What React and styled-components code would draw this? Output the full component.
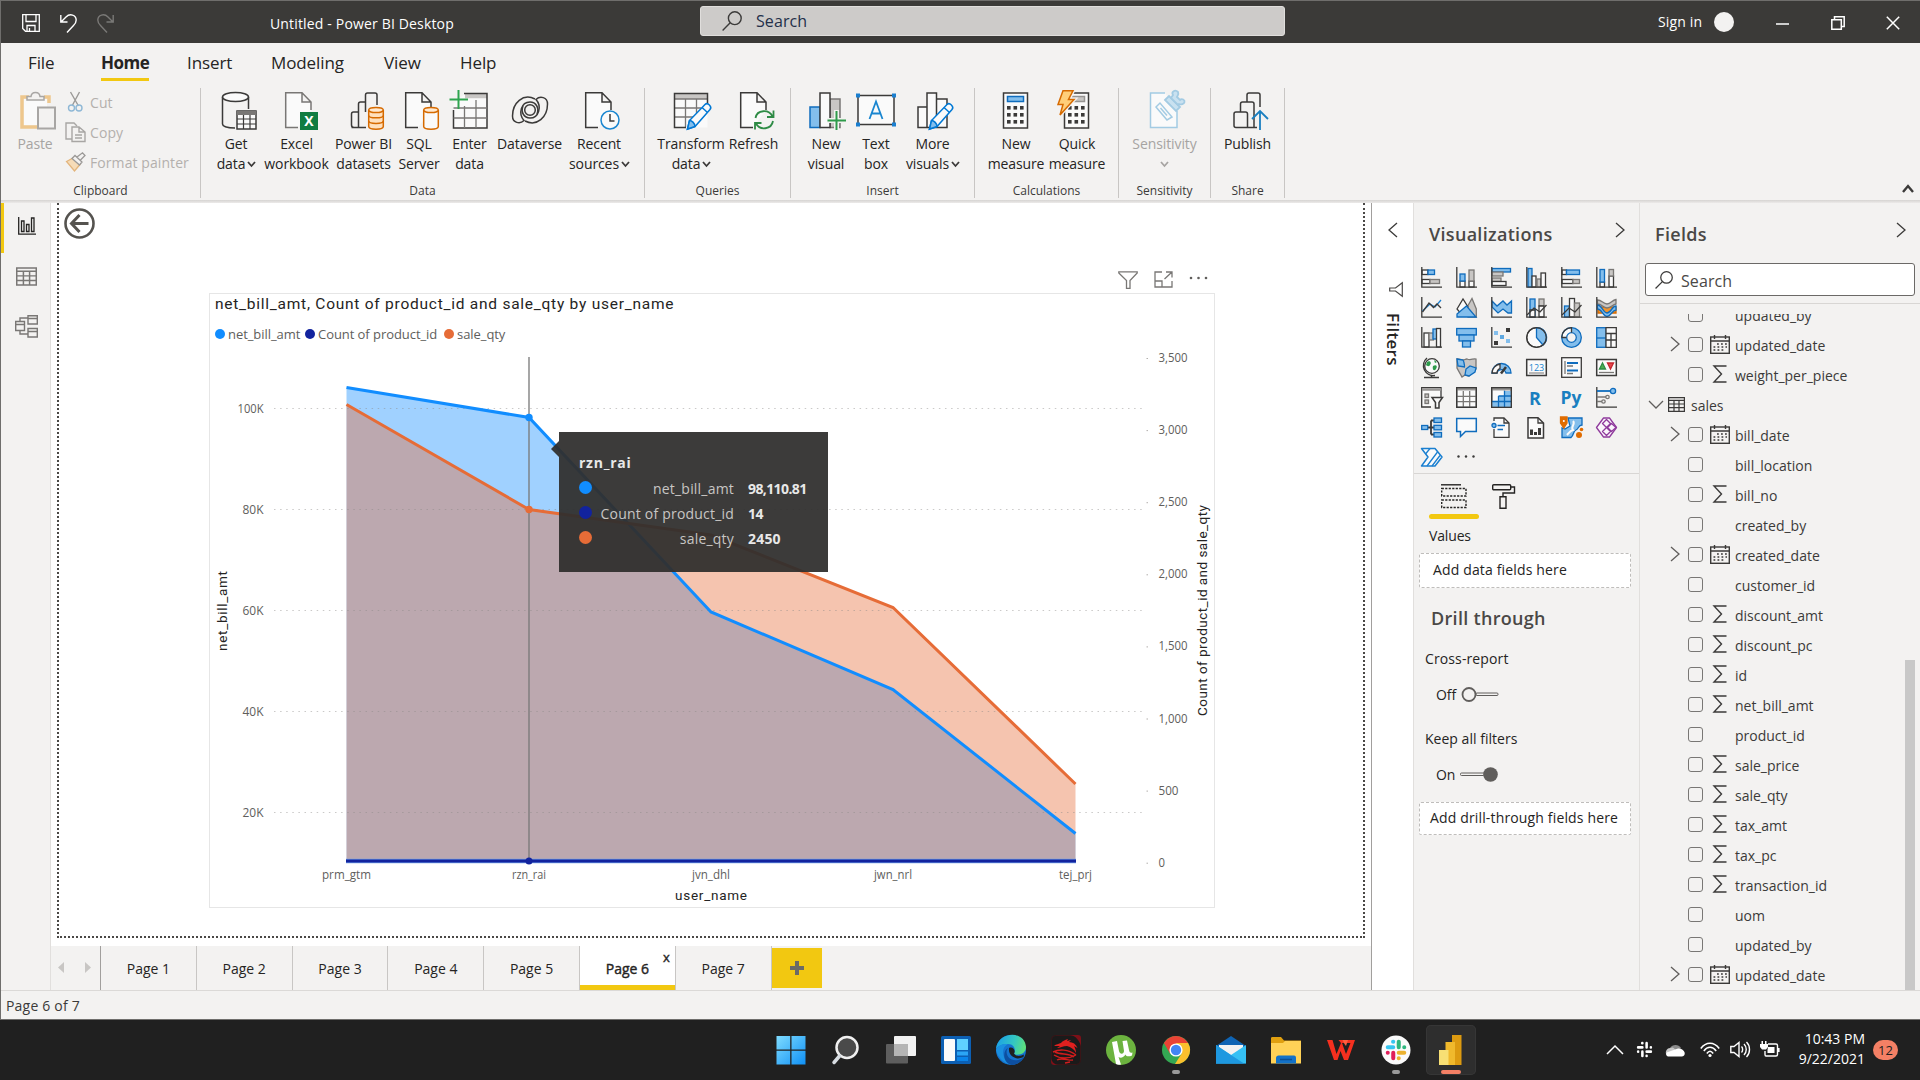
import React from "react";
import styled, { createGlobalStyle } from "styled-components";

const Global = createGlobalStyle`
  * { box-sizing: border-box; }
  body { margin: 0; background: #202020; overflow: hidden; }
  body, #root { font-family: "Open Sans", "Noto Sans", sans-serif; color: #252423; }
  svg { display: block; flex: none; overflow: visible; }
`;

const INK = "#3b3a39";
const BLUE = "#0f6cbd";
const SKY = "#83beec";
const GREY = "#c8c6c4";

/* ---------- frame ---------- */
const Screen = styled.div`
  width: 1920px; height: 1080px; display: flex; flex-direction: column; overflow: hidden;
`;
const Window = styled.div`
  height: 1020px; display: flex; flex-direction: column; background: #f3f2f1;
  border: 1px solid #6f6e6c; border-right: 0;
`;

/* ---------- title bar ---------- */
const TitleBar = styled.header`
  height: 42px; background: #3b3a38; color: #fff; display: flex; flex: none;
`;
const QuickTools = styled.div`
  width: 269px; display: flex; align-items: center; gap: 20px; padding: 2px 0 0 21px;
`;
const DocTitle = styled.div`
  width: 430px; font-size: 14px; line-height: 46px; letter-spacing: 0.16px;
`;
const TopSearch = styled.div`
  width: 585px; height: 30px; margin-top: 5px; border: 1px solid #e0dedc; border-radius: 3px;
  background: #cdcbc9; color: #243049; display: flex; align-items: center; gap: 14px;
  padding-left: 21px; font-size: 16px; letter-spacing: 0.1px;
`;
const Account = styled.div`
  margin-left: 373px; width: 78px; display: flex; align-items: center; gap: 12px; font-size: 14px;
  letter-spacing: 0.15px; white-space: nowrap; height: 41px;
`;
const Avatar = styled.span`
  width: 20px; height: 20px; border-radius: 50%; background: #f3f2f1; flex: none;
`;
const WindowButtons = styled.div`
  margin-left: 40px; height: 44px; display: flex; align-items: center; gap: 41px;
`;

/* ---------- ribbon ---------- */
const TabRow = styled.nav`
  height: 45px; display: flex; flex: none; padding-left: 27px; font-size: 17px; gap: 40px;
`;
const RibbonTab = styled.div`
  width: ${(p) => p.$w}px; height: 38px; line-height: 39px; white-space: nowrap; letter-spacing: -0.1px;
  margin-left: ${(p) => p.$ml || 0}px;
  font-weight: ${(p) => (p.$on ? 700 : 400)};
  ${(p) => p.$on && "letter-spacing:-0.5px;"}
  border-bottom: 3px solid ${(p) => (p.$on ? "#f2c811" : "transparent")};
`;
const Ribbon = styled.div`
  height: 112px; display: flex; flex: none; position: relative;
`;
const Group = styled.section`
  width: ${(p) => p.$w}px; height: 110px; border-right: 1px solid #c8c6c4; display: flex; flex-direction: column;
`;
const GroupBody = styled.div`
  height: 93px; flex: none; display: flex; padding: 2px 0 0 ${(p) => p.$pad || 0}px;
  justify-content: ${(p) => (p.$center ? "center" : "flex-start")};
`;
const GroupName = styled.div`
  text-align: center; font-size: 12px; line-height: 20px; letter-spacing: 0; color: #3b3a39; flex: none;
`;
const BigButton = styled.div`
  width: ${(p) => p.$w}px; display: flex; flex-direction: column; align-items: center; flex: none;
  color: ${(p) => (p.$off ? "#a6a4a2" : "#252423")};
`;
const BigLabel = styled.div`
  font-size: 14px; line-height: 20px; letter-spacing: -0.1px; white-space: nowrap;
  display: flex; align-items: center; gap: 3px; height: 20px;
  &:first-of-type { margin-top: 4px; }
`;
const SmallStack = styled.div`
  display: flex; flex-direction: column; padding: 0 0 0 10px; margin-top: -3px;
`;
const SmallButton = styled.div`
  height: 30px; display: flex; align-items: center; gap: 4px; color: #b3b0ad; font-size: 14px; white-space: nowrap;
  letter-spacing: 0.08px;
`;
const Collapse = styled.div`
  margin-left: auto; padding: 98px 7px 0 0;
`;
const RibbonShadow = styled.div`
  height: 3px; flex: none; background: linear-gradient(#d6d4d2, #eceae9);
`;

/* ---------- body ---------- */
const Body = styled.main`
  height: 787px; display: flex; flex: none;
`;
const Rail = styled.aside`
  width: 50px; border-right: 1px solid #e1dfdd; display: flex; flex-direction: column; flex: none;
`;
const RailItem = styled.div`
  height: 50px; display: flex; align-items: center; justify-content: center;
  border-left: 3px solid ${(p) => (p.$on ? "#f2c811" : "transparent")}; padding: 0 1px 4px 0;
`;
const Center = styled.div`
  width: 1320px; display: flex; flex-direction: column; flex: none; background: #fff;
`;
const Page = styled.div`
  margin: 0 6px 8px; width: 1308px; height: 735px; border: 2px dotted #4a4846; border-top: 0; padding-top: 5px;
  display: flex; flex-direction: column;
`;
const Back = styled.div` margin-left: 5px; height: 31px; flex: none; `;
const VisualTools = styled.div`
  height: 18px; margin: 32px 0 4px; padding-right: 156px; display: flex; justify-content: flex-end; gap: 16px; flex: none;
`;
const Visual = styled.article`
  margin-left: 150px; width: 1006px; height: 615px; border: 1px solid #e6e6e6; position: relative; flex: none;
`;
const VisualTitle = styled.h3`
  margin: 0; height: 28px; padding-left: 5px; font: 400 15.5px/21px Roboto, sans-serif; letter-spacing: 0.75px; color: #252423;
`;
const Legend = styled.div`
  height: 23px; display: flex; align-items: center; padding-left: 5px; font-size: 13px; color: #605e5c;
`;
const LegendItem = styled.div`
  width: ${(p) => p.$w}px; display: flex; align-items: center; gap: 3px; white-space: nowrap; letter-spacing: -0.06px;
`;
const Dot = styled.span`
  width: ${(p) => p.$s}px; height: ${(p) => p.$s}px; border-radius: 50%; background: ${(p) => p.$c}; flex: none;
`;
const Tooltip = styled.div`
  position: absolute; left: 349px; top: 138px; width: 269px; height: 140px; background: rgba(48, 47, 46, 0.94);
  color: #e8e8e8; padding: 19px 0 0 20px; display: flex; flex-direction: column; font-size: 14px;
  &::before {
    content: ""; position: absolute; left: -8px; top: 9px; width: 8px; height: 16px;
    background: rgba(48, 47, 46, 0.94); clip-path: polygon(100% 0, 100% 100%, 0 50%);
  }
`;
const TipTitle = styled.div` font-weight: 700; line-height: 23px; height: 24px; letter-spacing: 0.75px; `;
const TipRow = styled.div`
  height: 25px; display: grid; grid-template-columns: 13px 142px 1fr; align-items: center;
`;
const TipName = styled.span` text-align: right; color: #c8c6c4; letter-spacing: 0.2px; white-space: nowrap; padding-top: 2px;`;
const TipValue = styled.b` padding: 2px 0 0 14px; letter-spacing: ${(p) => p.$ls}px; `;

const PageTabs = styled.div`
  height: 44px; display: flex; background: #f3f2f1; flex: none;
`;
const TabArrows = styled.div`
  width: 50px; border-right: 1px solid #a19f9d; display: flex; align-items: center; gap: 21px; padding: 0 7px 2px;
`;
const PageTab = styled.div`
  width: 95.8px; border-right: 1px solid #c8c6c4; text-align: center; font-size: 14px; line-height: 45px; position: relative;
  background: ${(p) => (p.$on ? "#fff" : "transparent")};
  box-shadow: ${(p) => (p.$on ? "inset 0 -5px #f2c811" : "none")};
  -webkit-text-stroke: ${(p) => (p.$on ? "0.4px #252423" : "0")};
`;
const TabClose = styled.span`
  position: absolute; right: 5px; top: 2px; font-size: 13px; line-height: 18px;
`;
const AddPage = styled.div`
  width: 50px; height: 40px; margin-top: 2px; background: #f2c811; display: flex; align-items: center; justify-content: center;
`;

/* ---------- panes ---------- */
const FilterPane = styled.aside`
  width: 43px; background: #fff; border-left: 1px solid #a19f9d; border-right: 1px solid #e1dfdd; flex: none;
  display: flex; flex-direction: column; padding: 20px 0 0 17px;
`;
const FilterIcon = styled.div` margin-top: 45px; `;
const FilterTitle = styled.div`
  writing-mode: vertical-rl; align-self: flex-start; margin: 16px 0 0 -8px; font-size: 17px; line-height: 24px; font-weight: 600;
  letter-spacing: 0.3px;
`;
const VizPane = styled.aside`
  width: 226px; border-right: 1px solid #e1dfdd; flex: none; display: flex; flex-direction: column;
`;
const PaneHead = styled.div`
  height: ${(p) => p.$h}px; padding: 18px 15px 0 15px; display: flex; justify-content: space-between;
  svg { margin-top: 2px; }
`;
const PaneTitle = styled.h2`
  margin: 0; font-size: 18px; line-height: 26px; font-weight: 600; color: #4a4846; letter-spacing: 0.3px;
`;
const VizGrid = styled.div`
  display: grid; grid-template-columns: repeat(6, 35px); grid-auto-rows: 30px; padding-left: 7px; height: 206px;
`;
const Rule = styled.div` height: 1px; background: #d8d6d4; flex: none; `;
const FormatTabs = styled.div`
  display: flex; height: 46px; padding-left: 15px; gap: 1px;
`;
const FormatTab = styled.div`
  width: 50px; padding: 10px 0 0 12px; height: 45px; position: relative;
  &::after { content: ""; display: ${(p) => (p.$on ? "block" : "none")}; margin: 5px 0 0 -12px; width: 50px; height: 5px;
    border-radius: 3px; background: #f2c811; }
`;
const PaneLabel = styled.div`
  font-size: 14px; line-height: 20px; height: 20px; margin: ${(p) => p.$m}; letter-spacing: ${(p) => p.$ls}px;
`;
const DropWell = styled.div`
  margin: ${(p) => p.$mt || 0}px 8px 0 5px; height: ${(p) => p.$h}px; line-height: ${(p) => p.$h - 4}px; border: 1px dashed #bfbdbb; border-radius: 2px;
  background: #fff; font-size: 14px; padding-left: ${(p) => p.$pad}px; white-space: nowrap; letter-spacing: 0.15px;
`;
const DrillTitle = styled(PaneTitle)` margin: 17px 0 0 17px; `;
const Switch = styled.div`
  display: flex; align-items: center; gap: 5px; height: 20px; margin: 15px 0 0 22px; font-size: 14px; letter-spacing: -0.1px;
`;

const FieldPane = styled.aside`
  flex: 1; display: flex; flex-direction: column;
`;
const FieldSearch = styled.div`
  margin: 0 5px 7px; height: 33px; flex: none; border: 1px solid #6b6967; border-radius: 3px; background: #fff; display: flex; align-items: center;
  gap: 8px; padding-left: 9px; font-size: 16px; color: #4a4846; letter-spacing: 0.1px;
  span { padding-top: 2px; }
`;
const ListWrap = styled.div`
  display: flex; margin-top: 10px; height: 676px; overflow: hidden;
`;
const List = styled.div` width: 265px; margin-top: -15px; `;
const FieldRow = styled.div`
  height: 30px; display: flex; align-items: center; font-size: 14px; color: #3b3a39; white-space: nowrap;
  padding-left: ${(p) => (p.$table ? 9 : 31)}px;
`;
const Twisty = styled.span` width: ${(p) => p.$w}px; flex: none; `;
const Check = styled.span`
  width: 15px; height: 15px; border: 1px solid #797775; border-radius: 3px; flex: none;
`;
const Kind = styled.span`
  width: ${(p) => p.$w}px; flex: none; display: flex; justify-content: ${(p) => (p.$w > 30 ? "center" : "flex-start")};
`;
const FieldName = styled.span` padding-top: 2px; margin-left: ${(p) => p.$ml || 0}px; `;
const Thumb = styled.div` width: 10px; height: 330px; margin-top: 346px; background: #c8c8c8; `;

const Status = styled.footer`
  flex: 1; border-top: 1px solid #dbd9d7; padding-left: 5px; font-size: 14px; line-height: 30px; color: #3b3a39; letter-spacing: 0.2px;
`;

/* ---------- taskbar ---------- */
const Taskbar = styled.div`
  height: 60px; background: #202020; display: flex; color: #fff;
`;
const Apps = styled.div` margin-left: 766px; display: flex; gap: 5px; padding-top: 5px; width: 834px; `;
const AppTile = styled.div`
  width: 50px; height: 50px; border-radius: 5px; display: flex; flex-direction: column; align-items: center;
  padding-top: 10px; background: ${(p) => (p.$on ? "#2e2e2e" : "transparent")};
  box-shadow: ${(p) => (p.$on ? "inset 0 0 0 1px #363636" : "none")};
`;
const Running = styled.span`
  margin-top: 5px; height: 4px; border-radius: 2px; width: ${(p) => (p.$on ? 20 : 8)}px; background: ${(p) => (p.$on ? "#f48065" : "#9a9a9a")};
`;
const Tray = styled.div`
  display: flex; align-items: center; width: 180px; padding-left: 7px; height: 59px;
`;
const TrayItem = styled.span` margin-left: ${(p) => p.$ml}px; `;
const Clock = styled.div`
  width: 85px; text-align: right; font-size: 14px; line-height: 20px; padding-top: 9px; letter-spacing: 0;
`;
const Badge = styled.div`
  margin: 20px 0 0 8px; width: 25px; height: 20px; border-radius: 10px; background: #f48065; color: #202020;
  font-size: 13px; line-height: 20px; text-align: center;
`;

/* ---------- small drawings ---------- */
const Chevron = ({ d = "right", w = 8, h = 14, c = "#3b3a39", s = 1.3 }) => {
  const pts = {
    right: `0,0 ${w},${h / 2} 0,${h}`,
    left: `${w},0 0,${h / 2} ${w},${h}`,
    down: `0,0 ${w / 2},${h} ${w},0`,
    up: `0,${h} ${w / 2},0 ${w},${h}`,
  }[d];
  return (
    <svg width={w} height={h}><polyline points={pts} fill="none" stroke={c} strokeWidth={s} /></svg>
  );
};
const Magnifier = ({ s = 20, c = "#3b3a39" }) => (
  <svg width={s} height={s} viewBox="0 0 20 20" fill="none" stroke={c} strokeWidth="1.4">
    <circle cx="12.8" cy="7.2" r="6.4" /><path d="M8.2 11.8L.6 19.4" />
  </svg>
);

/* ribbon icons, 40 x 40 */
const Ico = ({ children, ...r }) => (
  <svg width="40" height="40" viewBox="0 0 40 40" fill="none" stroke={INK} strokeWidth="1.5" {...r}>{children}</svg>
);
const Doc = ({ x = 6, c = INK }) => (
  <path d={`M${x + 13} 37.5H${x + 0.7}V2.8H${x + 17}L${x + 26} 12V20M${x + 17} 2.8V12H${x + 26}`} stroke={c} fill="#fafafa" />
);
const Cyl = ({ rings }) => (
  <g stroke="#d66a00" fill="#ffe9cf">
    <path d="M24.7 20V36.5C24.7 40 39.3 40 39.3 36.5V20" fill={rings ? "#ffe0bd" : "#fafafa"} />
    <ellipse cx="32" cy="20" rx="7.3" ry="2.6" />
    {rings && <path d="M24.7 25.5C24.7 28.6 39.3 28.6 39.3 25.5M24.7 31C24.7 34.2 39.3 34.2 39.3 31" fill="none" />}
  </g>
);
const Pencil = () => (
  <g stroke="#0078d4" fill="#fafafa">
    <path d="M16.5 39L18.5 30.5L34 14.5C36.5 12 41.5 16.5 39 19.5L24 36.5Z" />
    <path d="M16.5 39L18.5 30.5C21 30.5 24 33.5 24 36.5Z" fill={SKY} />
    <path d="M31 17.5L36.5 22.5" />
  </g>
);
const CalcBody = ({ x, grey }) => (
  <g>
    <rect x={x} y="3" width="24" height="35" fill="#fafafa" />
    <rect x={x + 4} y="6.5" width="16" height="5" fill={grey ? GREY : SKY} stroke={grey ? "#979593" : BLUE} />
    {[16, 23, 30].map((y) => [4, 10.5, 17].map((dx) => (
      <rect key={y + "-" + dx} x={x + dx - 0.5} y={y} width="3.6" height="3.6" fill={INK} stroke="none" />
    )))}
  </g>
);

const icons = {
  get: (
    <Ico>
      <path d="M6.5 7V34C6.5 36.5 12 38 19 38M32.500 7V19" fill="none" />
      <ellipse cx="19.5" cy="7" rx="13" ry="4.6" fill="#fafafa" />
      <rect x="21" y="21" width="19" height="18" fill="#fafafa" /><path d="M21 23H40" strokeWidth="4" stroke="#797775" />
      <path d="M21 29H40M21 34H40M27.5 25V39M34 25V39" strokeWidth="1.2" />
    </Ico>
  ),
  excel: (
    <Ico>
      <Doc x={8} c="#797775" />
      <rect x="23" y="22" width="18" height="18" fill="#107c41" stroke="none" />
      <text x="32" y="36" fontSize="14" fontWeight="700" fill="#fff" stroke="none" textAnchor="middle">X</text>
    </Ico>
  ),
  pbi: (
    <Ico>
      <path d="M13.5 37.5H10C8 37.5 7.5 37 7.5 35V24C7.5 22.5 8 22 9.5 22H14M14.5 37.5V14C14.5 12.5 15 12 16.5 12H21M7.5 37.5H22M21.5 22V5C21.5 3.5 22 3 23.5 3H31C32.5 3 33 3.5 33 5V15" fill="none" />
      <Cyl rings />
    </Ico>
  ),
  sql: <Ico><Doc /><Cyl /></Ico>,
  enter: (
    <Ico>
      <path d="M3.5 14V38H37V3.5H15" fill="#fafafa" stroke="none" />
      <path d="M15 6H37" strokeWidth="4.5" stroke={GREY} /><path d="M14 3.5H37V38H3.5V20" fill="none" />
      <path d="M14.5 16V38M26 10V38M3.5 18H37M3.5 28H37" stroke="#797775" strokeWidth="1.3" />
      <path d="M-.5 9.500H18M8.500 0V19" stroke="#2ea44f" strokeWidth="2" />
    </Ico>
  ),
  dataverse: (
    <Ico strokeWidth="1.5">
      <path d="M25 9C13 3 2.500 13 2.500 26C2.500 33 10 34.500 14 30.500C8 24 11 12 20 12C26 12 29.500 18 27 24" />
      <path d="M15 31C27 37 37.500 27 37.500 14C37.500 7 30 5.500 26 9.500C32 16 29 28 20 28C14 28 10.500 22 13 16" />
      <circle cx="20" cy="20" r="5.300" />
    </Ico>
  ),
  recent: (
    <Ico>
      <Doc x={6} />
      <circle cx="31" cy="30" r="9" fill="#fafafa" stroke="#1a86d0" /><path d="M31 24V31H35.500" />
    </Ico>
  ),
  transform: (
    <Ico>
      <rect x="3.5" y="3.5" width="33" height="34" fill="#fafafa" stroke="none" />
      <path d="M3.5 6.5H36.5" stroke={GREY} strokeWidth="5" />
      <path d="M3.5 18H30M3.5 27H22M14.5 9V37M25.5 9V23M3.5 9H36.5" stroke="#797775" strokeWidth="1.3" />
      <path d="M15 37.5H3.5V3.5H36.5V14" fill="none" /><Pencil />
    </Ico>
  ),
  refresh: (
    <Ico>
      <Doc />
      <g stroke="#2e8b45" strokeWidth="1.8">
        <path d="M21.5 28C23 19.5 35 19 38.5 26.5M39.5 20.5V27H33" fill="none" />
        <path d="M39 31C37.5 39.5 26 41 22 33.5M21 39.5V33H27.5" fill="none" />
      </g>
    </Ico>
  ),
  newVisual: (
    <Ico>
      <rect x="24" y="9" width="10" height="28.5" fill={GREY} stroke="#797775" />
      <rect x="4" y="17" width="10" height="20.5" fill={SKY} stroke={BLUE} />
      <rect x="14" y="3" width="10" height="34.5" fill="#fafafa" />
      <path d="M30.5 20V40M21 30.5H40" stroke="#f3f2f1" strokeWidth="5" />
      <path d="M30.5 21V40M21.5 30.5H40" stroke="#2e9b4b" strokeWidth="2" />
    </Ico>
  ),
  textBox: (
    <Ico>
      <rect x="2" y="5.5" width="36" height="29" fill="#fafafa" />
      {[[2, 5.5], [38, 5.5], [2, 34.5], [38, 34.5]].map(([x, y]) => (
        <rect key={x + "," + y} x={x - 2} y={y - 2} width="4" height="4" fill="#1a7fd0" stroke="none" />
      ))}
      <path d="M13.5 29L20 11.5L26.5 29M15.5 23.5H24.5" stroke="#1a86d0" strokeWidth="1.8" />
    </Ico>
  ),
  moreVisuals: (
    <Ico>
      <path d="M5 17H14V37.5H5Z M14 3H23.5V37.5H14Z M23.5 9H34V37.5H23.5Z" fill="#fafafa" /><Pencil />
    </Ico>
  ),
  newMeasure: <Ico><CalcBody x={7.5} /></Ico>,
  quick: (
    <Ico>
      <CalcBody x={7.5} grey />
      <path d="M6 0.8H16L11.5 9.5H17L3 25L6 14.5H1Z" fill="#ffd58a" stroke="#f3f2f1" strokeWidth="4" />
      <path d="M6 0.8H16L11.5 9.5H17L3 25L6 14.5H1Z" fill="#ffcf7a" stroke="#d66a00" />
    </Ico>
  ),
  sensitivity: (
    <Ico stroke="#a3cbe3">
      <path d="M20 3H5.5V37.5H32V21" fill="#fafafa" />
      <path d="M11 17L15 13L27 27L22 30ZM15.5 18L22 25.5" />
      <path d="M20 10L24 6L35 17L31 21Z" fill="#c9e1f0" strokeWidth="1.800" />
      <path d="M26 8L28 5C26 2 30 -1 33 2C34 4 33 5 32 7L35 10C37 8 40 10 39.500 12C39 14 36 15 34 14L33 15Z" fill="#c9e1f0" strokeWidth="1.800" />
    </Ico>
  ),
  publish: (
    <Ico>
      <path d="M19.5 37.5H8C6.5 37.5 6 37 6 35.5V24C6 22.5 6.5 22 8 22H12.5M19.5 37.5V24C19.5 22.5 19 22 17.5 22H12.5V14C12.5 12.5 13 12 14.5 12H19M26 37.5V14C26 12.5 25.5 12 24 12H19V5C19 3.5 19.5 3 21 3H30C31.5 3 32 3.5 32 5V17M19.5 37.5H29" fill="none" />
      <path d="M32 40V22M24 29L32 21L40 29" stroke="#1a7fc0" strokeWidth="1.8" />
    </Ico>
  ),
  paste: (
    <Ico stroke="#a8a6a4">
      <path d="M14 7H7V37H22M29 7H34V13" stroke="#eec78d" strokeWidth="3.5" />
      <path d="M9 9H32V35H9Z" fill="#fafafa" stroke="none" />
      <path d="M12 10V6.5H16C16.5 1 24.5 1 25 6.5H29V10Z" fill="#f3f2f1" />
      <rect x="23" y="17.5" width="17" height="21" fill="#f3f2f1" strokeWidth="2" />
    </Ico>
  ),
};

const smallIcons = {
  cut: (
    <svg width="21" height="20" viewBox="0 0 21 20" fill="none" strokeWidth="1.4">
      <path d="M5.5 0L13.5 14M14.5 0L7 14" stroke="#9b9997" /><circle cx="6.5" cy="16" r="3" stroke="#8fb8d6" /><circle cx="14" cy="16" r="3" stroke="#8fb8d6" />
    </svg>
  ),
  copy: (
    <svg width="21" height="20" viewBox="0 0 21 20" fill="none" stroke="#a8a6a4" strokeWidth="1.4">
      <path d="M7 17H1V1H9L12 4" /><path d="M7 5H14L20 10V19.5H7ZM14 5V10H20M10 13H17M10 16H17" fill="#f3f2f1" />
    </svg>
  ),
  painter: (
    <svg width="21" height="20" viewBox="0 0 21 20" fill="none" strokeWidth="1.3">
      <path d="M1.5 9.5L8 6L15 12.5L9.5 19Z" fill="#f6dcb8" stroke="#e3b57c" /><path d="M7 6.5L10 3.5L17 10L14.5 13Z M12 5L17.5 0.8L20 3.5L15.5 8" fill="#f3f2f1" stroke="#9b9997" />
    </svg>
  ),
};

const L = ({ children, caret, off }) => (
  <BigLabel>{children}{caret && <Chevron d="down" w={7} h={4} s={1.8} c={off ? "#a6a4a2" : INK} />}</BigLabel>
);
const Big = ({ w, icon, a, b, caret, off }) => (
  <BigButton $w={w} $off={off}>
    {icons[icon]}
    <L>{a}</L>
    {(b || caret) && <L caret={caret} off={off}>{b}</L>}
  </BigButton>
);

const groups = [
  { name: "Data", w: 444, pad: 5, items: [
    { w: 60, icon: "get", a: "Get", b: "data", caret: true },
    { w: 61, icon: "excel", a: "Excel", b: "workbook" },
    { w: 73, icon: "pbi", a: "Power BI", b: "datasets" },
    { w: 38, icon: "sql", a: "SQL", b: "Server" },
    { w: 63, icon: "enter", a: "Enter", b: "data" },
    { w: 57, icon: "dataverse", a: "Dataverse" },
    { w: 82, icon: "recent", a: "Recent", b: "sources", caret: true }] },
  { name: "Queries", w: 146, pad: 16, items: [
    { w: 60, icon: "transform", a: "Transform", b: "data", caret: true },
    { w: 65, icon: "refresh", a: "Refresh" }] },
  { name: "Insert", w: 184, pad: 9, items: [
    { w: 52, icon: "newVisual", a: "New", b: "visual" },
    { w: 48, icon: "textBox", a: "Text", b: "box" },
    { w: 65, icon: "moreVisuals", a: "More", b: "visuals", caret: true }] },
  { name: "Calculations", w: 144, pad: 10, items: [
    { w: 62, icon: "newMeasure", a: "New", b: "measure" },
    { w: 60, icon: "quick", a: "Quick", b: "measure" }] },
  { name: "Sensitivity", w: 92, center: true, items: [{ w: 80, icon: "sensitivity", a: "Sensitivity", caret: true, off: true }] },
  { name: "Share", w: 74, center: true, items: [{ w: 60, icon: "publish", a: "Publish" }] },
];

/* visualization gallery, 21 x 21 */
const V = ({ children }) => (
  <svg width="21" height="21" viewBox="0 0 21 21" fill="none" stroke={INK} strokeWidth="1.3">{children}</svg>
);
const Axis = () => <path d="M.8 0V20.2H21" />;
const Grid3 = ({ fill }) => (
  <>
    <rect x=".7" y=".7" width="19.6" height="19.6" fill="#fafafa" />
    {fill && <path d="M13.5 4H20V20H1V14H7.5V9H13.5Z" fill={SKY} stroke="none" />}
    {fill && <path d="M13.5 3.5V20M7.5 9V20M7.5 9H20M1 14.5H20" stroke={BLUE} />}
    <path d="M1 2.2H20" stroke="#979593" strokeWidth="2.5" />
    {!fill && <path d="M7.3 4V20M13.7 4V20M1 9.3H20M1 14.7H20" stroke="#797775" />}
    <rect x=".7" y=".7" width="19.6" height="19.6" />
  </>
);
const B = { fill: SKY, stroke: BLUE };
const G = { fill: GREY, stroke: "#797775" };
const W = { fill: "#fafafa", stroke: INK };
const gallery = [
  <V><rect x="1" y="3" width="6" height="4.5" {...W} /><rect x="7" y="3" width="6.5" height="4.5" {...B} /><rect x="1" y="12.5" width="8" height="4" {...W} /><rect x="9" y="12.5" width="9.5" height="4" {...G} /><Axis /></V>,
  <V><rect x="4" y="14" width="5" height="6" {...W} /><rect x="4" y="7" width="5" height="7" {...B} /><rect x="13" y="14" width="5" height="6" {...W} /><rect x="13" y="3" width="5" height="11" {...G} /><Axis /></V>,
  <V><rect x="1" y="1.5" width="18.5" height="3.5" {...B} /><rect x="1" y="5" width="11" height="4" {...G} /><rect x="1" y="11" width="9" height="3.5" {...G} /><rect x="1" y="14.5" width="14" height="4" {...W} /><Axis /></V>,
  <V><rect x="2" y="1.5" width="4" height="18.5" {...B} /><rect x="6" y="9" width="4" height="11" {...W} /><rect x="11" y="12" width="4" height="8" {...G} /><rect x="15" y="6" width="4.5" height="14" {...W} /><Axis /></V>,
  <V><rect x="1" y="3" width="4.5" height="4.5" {...W} /><rect x="5.5" y="3" width="13" height="4.5" {...B} /><rect x="1" y="12.5" width="11" height="4" {...W} /><rect x="12" y="12.5" width="6.5" height="4" {...G} /><Axis /></V>,
  <V><rect x="4" y="15" width="4.5" height="5" {...W} /><rect x="4" y="2.5" width="4.5" height="12.5" {...B} /><rect x="13" y="9" width="4.5" height="11" {...W} /><rect x="13" y="2.5" width="4.5" height="6.5" {...G} /><Axis /></V>,
  <V><Axis /><path d="M1.5 14L9 7L14 10L20 3" stroke="#1a7fd0" /><path d="M1.5 15L8 6L12.5 10.5L16 7L20 11" /></V>,
  <V><path d="M10 12L16 1.5L20.3 12V20H12Z" {...G} /><path d="M1 12L7 2L12 10L6 18Z" {...W} /><path d="M1 20V17L10.5 9L20 20Z" {...B} /></V>,
  <V><path d="M1 4L6 9L12 4L16 8L20.5 4V16H17L12 12L7 16L1 10Z" {...B} /><Axis /></V>,
  <V><rect x="4" y="2" width="5" height="18" {...B} /><rect x="13" y="2" width="5" height="7" {...G} /><path d="M4 13H9V20H4ZM13 9H18V20H13Z" {...W} /><path d="M1 18L8 11L14 15L20.5 8" /><Axis /></V>,
  <V><rect x="3.5" y="9" width="5" height="11" {...B} /><rect x="8.5" y="1.5" width="5" height="18.5" {...W} /><rect x="13.5" y="6" width="5" height="14" {...G} /><path d="M1 18L8 11L14 15L20.5 8" /><Axis /></V>,
  <V><path d="M2 10H20V16H2Z" fill="#f0932b" stroke="#d66a00" /><path d="M1.5 3C6 3 7 7 11 7C15 7 16 3 20 2.5V7C16 8 15 11 11 11C7 11 6 7 1.5 7Z" {...G} /><path d="M1.5 8C6 8 7 16 11 16C15 16 16 9 20 9V13C16 13 15 19.5 11 19.5C7 19.5 6 12 1.5 12Z" {...B} /><Axis /></V>,
  <V><rect x="3" y="6" width="5" height="14" {...W} /><rect x="8" y="6" width="4.5" height="7" {...G} /><rect x="12" y="2" width="4" height="10" {...B} /><rect x="15.5" y="1.5" width="4" height="18.5" {...W} /><Axis /></V>,
  <V><rect x=".7" y="1.5" width="19.6" height="6.5" {...B} /><rect x="3" y="8" width="15" height="6" {...B} /><rect x="6.5" y="14" width="8" height="6" {...B} /></V>,
  <V><Axis /><g stroke="none"><rect x="3" y="4" width="4" height="4" fill={SKY} /><rect x="9" y="8" width="4" height="4" fill="#5ea8e0" /><rect x="15" y="1" width="4" height="4" fill={INK} /><rect x="3" y="14" width="4" height="4" fill={INK} /><rect x="15" y="12" width="4" height="4" fill={SKY} /></g></V>,
  <V><circle cx="10.5" cy="10.5" r="9.8" {...W} /><path d="M10.5 .7A9.8 9.8 0 0 1 17 18L10.5 10.5Z" {...B} /><circle cx="10.5" cy="10.5" r="9.8" /></V>,
  <V><circle cx="10.5" cy="10.5" r="7.5" stroke={SKY} strokeWidth="5" /><path d="M3 10.5A7.5 7.5 0 0 1 10.5 3" stroke="#fafafa" strokeWidth="5" /><circle cx="10.5" cy="10.5" r="9.8" stroke={BLUE} /><circle cx="10.5" cy="10.5" r="4.8" stroke={BLUE} /><path d="M.7 10.5A9.8 9.8 0 0 1 10.5 .7V5.5M.7 10.5H5.5" /></V>,
  <V><rect x=".7" y=".7" width="9.3" height="19.6" {...B} /><path d="M.7 11H10" stroke={BLUE} /><path d="M10 .7H20.3V20.3H10ZM10 6.5H20M15 6.5V20M10 13H15M15 13H20" fill="#fafafa" /></V>,
  <V><circle cx="11" cy="9" r="7.3" fill="#fafafa" /><path d="M6 5C9 3 11 6 9 8C8 10 6 9 5 8ZM12 9C15 7 17 9 15 12C13 15 11 12 12 9ZM13 3L16 5L14 6Z" fill="#2e9b4b" stroke="none" /><path d="M6 1A10 10 0 0 0 14 18.5M10.5 18V20M3 20.5H18" strokeWidth="1.5" /></V>,
  <V><path d="M1 2L7 3C9 3 9 2 11 2C15 4 17 1 20 2V12L13 19L9 18L6 20L1 11Z" {...G} /><path d="M1 2L7 3C9 6 8 10 9 10L2 9ZM9 18L10 12L14 9L20 11L19 15L13 19Z" {...B} /></V>,
  <V><path d="M1 16A9.5 9.5 0 0 1 20 16H15A4.7 4.7 0 0 0 6 16Z" {...B} /><path d="M1 16A9.5 9.5 0 0 1 9 7V11.5A4.7 4.7 0 0 0 6 16Z" {...W} /><path d="M10 16.5L15 10" strokeWidth="2.5" /></V>,
  <V><rect x=".7" y="2.5" width="19.6" height="16" {...W} strokeWidth="1.5" /><path d="M3 16H18" stroke="#979593" /><text x="10.5" y="13.5" fontSize="9" textAnchor="middle" fill="#1a86d0" stroke="none">123</text></V>,
  <V><rect x=".7" y=".7" width="19.6" height="19.6" {...W} /><path d="M4 4V17" stroke="#797775" /><path d="M6 6H17M6 13.5H17" stroke={BLUE} strokeWidth="1.8" /><path d="M6 9H12M6 16.5H12" stroke="#797775" /></V>,
  <V><rect x=".7" y="2.5" width="19.6" height="16" {...W} strokeWidth="1.5" /><path d="M3 15.5H18" stroke="#797775" /><path d="M3.5 12L6.5 6L9.5 12Z" fill="#4caf50" stroke="#2e8b45" /><path d="M11.5 6H17.5L14.5 12Z" fill="#e8484e" stroke="#c4262e" /></V>,
  <V><path d="M10 20H.7V.7H20V10" {...W} /><path d="M1 2.5H20" stroke="#979593" strokeWidth="2.5" /><rect x="4" y="7" width="3.5" height="3.5" {...G} /><rect x="4" y="13" width="3.5" height="3.5" {...G} /><path d="M11 10.5H21.5L18 15.5V21H14.5V15.5Z" {...W} strokeWidth="1.5" /></V>,
  <V><Grid3 /></V>,
  <V><Grid3 fill /></V>,
  <V><text x="9" y="17.5" fontSize="18" fontWeight="700" textAnchor="middle" fill="#1a7fc0" stroke="none">R</text></V>,
  <V><text x="10" y="16.5" fontSize="17.5" fontWeight="700" textAnchor="middle" fill="#1a7fc0" stroke="none">Py</text></V>,
  <V><Axis /><path d="M1 4H14" stroke={BLUE} strokeWidth="1.8" /><circle cx="17" cy="4" r="2.6" {...B} /><path d="M1 10H10M1 14.5H6" stroke="#797775" /><circle cx="11.5" cy="10" r="1.7" stroke="#797775" /><circle cx="7.5" cy="14.5" r="1.7" stroke="#797775" /></V>,
  <V><path d="M7 10.5H13M10 3.5V17.5M10 3.5H13M10 17.5H13" strokeWidth="1.8" /><rect x=".7" y="8.5" width="6" height="4" {...B} /><rect x="13" y="1" width="7.5" height="4.5" {...B} /><rect x="13" y="8.3" width="7.5" height="4.5" {...B} /><rect x="13" y="15.5" width="7.5" height="4.5" {...B} /></V>,
  <V><path d="M.7 1.5H20.3V14.5H9.5L4.5 19.5V14.5H.7Z" fill="#fafafa" stroke={BLUE} strokeWidth="1.5" /></V>,
  <V><path d="M3 4V1H13L18 6V20.3H3V12" {...W} /><path d="M13 1V6H18" /><circle cx="3" cy="8.5" r="2" {...B} /><path d="M6.5 8.5H14M6.5 12.5H12" stroke={BLUE} /></V>,
  <V><path d="M2 .7H12L17.5 6V21H2Z" {...W} strokeWidth="1.5" /><path d="M12 1V6H17" /><path d="M5.5 18V12.5M9.5 18V15M13.5 18V11" strokeWidth="3" /></V>,
  <V><path d="M7 1H21V8C17 8 18 12 15 13C12 14 13 18 10 20.5H1V11L4 12L9 9Z" fill={SKY} stroke={BLUE} /><path d="M12 4C15 7 9 10 12 13C9 14 8 16 6 18" stroke="#fafafa" strokeWidth="2" /><path d="M-.5 0H6V6L2.8 11L-.5 6Z" fill="#e06c00" stroke="#e06c00" /><circle cx="2.8" cy="4" r="1" fill="#fff" stroke="none" /><circle cx="18" cy="18" r="3" fill="#e06c00" stroke="none" /><circle cx="20.5" cy="12.5" r="1.8" fill="#e06c00" stroke="none" /></V>,
  <V>
    <g stroke="#8f3a9c" strokeWidth="1.300" fill="#faf5fb" strokeLinejoin="round">
      <path d="M7.500 1H13.500L20.500 10.500L13.500 20H7.500L.5 10.500Z" />
      <path d="M10.500 2.500L14.500 6.500L10.500 10.500L6.500 6.500ZM15.500 6.500L20 10.500L15.500 14.500L11.500 10.500ZM10.500 10.500L14.500 14.500L10.500 18.500L6.500 14.500Z" />
    </g>
  </V>,
  <V>
    <path d="M.5 1.500H14L21 10L14 19H.5L7 10Z" fill="#fafafa" stroke="#1a7fd0" strokeWidth="1.500" strokeLinejoin="round" />
    <path d="M4.500 7L9 1.500M6 19L16.500 5M11 19L19 8.500" stroke="#1a7fd0" strokeWidth="1.300" />
  </V>,
  <V><g fill={INK} stroke="none"><circle cx="2.5" cy="9.5" r="1.2" /><circle cx="10" cy="9.5" r="1.2" /><circle cx="17.5" cy="9.5" r="1.2" /></g></V>,
];

/* ---------- chart ---------- */
const XS = [346.5, 529, 711, 893, 1075.5];
const amt = [387.5, 417.5, 612, 689.5, 833.5];
const qty = [404.5, 509.5, 535, 607.5, 784];
const users = [["prm_gtm", 49], ["rzn_rai", 34], ["jvn_dhl", 38], ["jwn_nrl", 38], ["tej_prj", 33]];
const line = (ys) => ys.map((y, i) => `${XS[i]},${y}`).join(" ");
const area = (ys) => `${XS[0]},861 ${line(ys)} ${XS[4]},861`;

const Chart = () => (
  <svg width="1004" height="562" viewBox="210 345 1004 562">
    <polygon points={area(amt)} fill="#118dff" fillOpacity=".4" />
    <polygon points={area(qty)} fill="#e66c37" fillOpacity=".4" />
    {[["100K", 409, 26], ["80K", 510, 21], ["60K", 611, 21], ["40K", 712, 21], ["20K", 813, 21]].map(([t, y, w]) => (
      <g key={t}>
        <path d={`M274 ${y - 0.5}H1145`} stroke="#8a8886" strokeOpacity=".45" strokeDasharray="1.5 4.6" />
        <text x={263.5 - w} y={y + 4} fontSize="12" fill="#605e5c" textLength={w} lengthAdjust="spacingAndGlyphs">{t}</text>
      </g>
    ))}
    {[3500, 3000, 2500, 2000, 1500, 1000, 500, 0].map((n, i) => (
      <g key={n}>
        <rect x="1146.5" y={358 + i * 72.1} width="1.5" height="1" fill="#b3b0ad" />
        <text x="1158.5" y={362 + i * 72.1} fontSize="12" fill="#605e5c" lengthAdjust="spacingAndGlyphs" textLength={n >= 1000 ? 29 : n ? 20 : 6.5}>
          {n.toLocaleString("en-US")}
        </text>
      </g>
    ))}
    <path d="M529 357V861" stroke="#777" strokeWidth="1.3" />
    <polyline points={line(amt)} fill="none" stroke="#118dff" strokeWidth="3" />
    <polyline points={line(qty)} fill="none" stroke="#e66c37" strokeWidth="3" />
    <path d="M346 861H1076" stroke="#6f9fe8" strokeWidth="4.5" /><path d="M346 861H1076" stroke="#12239e" strokeWidth="3" />
    <circle cx="529" cy="417.5" r="3.7" fill="#118dff" />
    <circle cx="529" cy="509.5" r="3.7" fill="#e66c37" />
    <circle cx="529" cy="861" r="3.5" fill="#12239e" />
    {users.map(([u, w], i) => (
      <text key={u} x={XS[i] - w / 2} y="879" fontSize="12" fill="#605e5c" textLength={w} lengthAdjust="spacingAndGlyphs">{u}</text>
    ))}
    <g fontFamily="Roboto" fontSize="13.5" fill="#252423">
      <text x="675" y="900" textLength="72">user_name</text>
      <text transform="translate(227 651) rotate(-90)" textLength="80">net_bill_amt</text>
      <text transform="translate(1207 716) rotate(-90)" textLength="211">Count of product_id and sale_qty</text>
    </g>
  </svg>
);

/* ---------- fields ---------- */
const Calendar = () => (
  <svg width="20" height="19" viewBox="0 0 20 19" fill="none" stroke={INK} strokeWidth="1.4">
    <rect x=".7" y="2" width="18.6" height="16.3" /><path d="M1 6H19M4.5 0V4M15.5 0V4" /><path d="M7 9H17M3.5 12H17M3.5 15H14" strokeDasharray="1.8 2.2" />
  </svg>
);
const Sigma = () => (
  <svg width="14" height="18" viewBox="0 0 14 18" fill="none" stroke={INK} strokeWidth="1.4"><path d="M13.5 1H1L8.5 9L1 17H13.5" /></svg>
);
const TableIcon = ({ w = 17, h = 15, c = INK }) => (
  <svg width={w} height={h} viewBox="0 0 17 15" fill="none" stroke={c} strokeWidth="1.2">
    <path d="M.6 .6H16.4V14.4H.6ZM.6 3.3H16.4M.6 7H16.4M.6 10.7H16.4M6 3V14M11 3V14" />
  </svg>
);
const fields = [
  ["updated_by"], ["updated_date", "d"], ["weight_per_piece", "s"], ["sales", "t"], ["bill_date", "d"], ["bill_location"],
  ["bill_no", "s"], ["created_by"], ["created_date", "d"], ["customer_id"], ["discount_amt", "s"], ["discount_pc", "s"],
  ["id", "s"], ["net_bill_amt", "s"], ["product_id"], ["sale_price", "s"], ["sale_qty", "s"], ["tax_amt", "s"],
  ["tax_pc", "s"], ["transaction_id", "s"], ["uom"], ["updated_by"], ["updated_date", "d"],
];
const Field = ({ name, kind }) =>
  kind === "t" ? (
    <FieldRow $table>
      <Twisty $w={19}><Chevron d="down" w={14} h={7} c="#605e5c" /></Twisty>
      <Kind $w={24}><TableIcon /></Kind>
      <FieldName $ml={-1}>{name}</FieldName>
    </FieldRow>
  ) : (
    <FieldRow>
      <Twisty $w={17}>{kind === "d" && <Chevron c="#605e5c" />}</Twisty>
      <Check />
      <Kind $w={33}>{kind === "d" ? <Calendar /> : kind === "s" ? <Sigma /> : null}</Kind>
      <FieldName $ml={-1}>{name}</FieldName>
    </FieldRow>
  );

/* ---------- taskbar icons, 30 x 30 ---------- */
const T = ({ children }) => <svg width="30" height="30" viewBox="0 0 30 30" fill="none">{children}</svg>;
const Slack = ({ mono, s = 22 }) => {
  const c = mono ? ["#fff", "#fff", "#fff", "#fff"] : ["#36c5f0", "#2eb67d", "#ecb22e", "#e01e5a"];
  return (
    <svg width={s} height={s} viewBox="0 0 24 24" x="4" y="4" strokeWidth={mono ? 3.6 : 4.4} strokeLinecap="round">
      <g stroke={c[0]}><path d="M3 9H9M9 3H8.8" /></g><g stroke={c[1]}><path d="M15 3V9M21 9V9.1" /></g>
      <g stroke={c[2]}><path d="M15 15H21M15 21V21.1" /></g><g stroke={c[3]}><path d="M9 15V21M3 15V15.1" /></g>
    </svg>
  );
};
const apps = [
  <T><defs><linearGradient id="win" x1="0" y1="0" x2="1" y2="1"><stop stopColor="#7fdcff" /><stop offset="1" stopColor="#0f90f5" /></linearGradient></defs>
    <path d="M.5 1H14.2V14.5H.5ZM15.5 1H29.5V14.5H15.5ZM.5 15.8H14.2V29.5H.5ZM15.5 15.8H29.5V29.5H15.5Z" fill="url(#win)" /></T>,
  <T><circle cx="16" cy="12.5" r="10.5" fill="#4a4a4a" stroke="#f0f0f0" strokeWidth="2.5" /><path d="M8.5 21L3 27.5" stroke="#d8dde2" strokeWidth="3.5" strokeLinecap="round" /></T>,
  <T><rect x="8" y="1" width="22" height="20" rx="1" fill="#f2f2f2" /><rect x="0" y="9" width="22" height="19.5" rx="1" fill="#6a6a6a" fillOpacity=".85" /><path d="M8 9H22V21H8Z" fill="#b5b5b5" /></T>,
  <T><rect y="1" width="30" height="28" rx="1.5" fill="#0c5fb3" /><rect x="3" y="4" width="11" height="22" rx="1" fill="#fafafa" /><path d="M16 4H27V15H16Z" fill="#5fd0ff" /><path d="M16 16.5H27V20.5H16Z" fill="#2ba5f5" /><path d="M16 22H27V26H16Z" fill="#0a84ea" /></T>,
  <T><defs><linearGradient id="edge" x1="0" y1=".3" x2="1" y2=".5"><stop stopColor="#1aa0e8" /><stop offset=".6" stopColor="#35c8c0" /><stop offset="1" stopColor="#5fe07a" /></linearGradient></defs>
    <circle cx="15" cy="15" r="15" fill="#1573cf" /><path d="M0 14C2 -4 29 -5 30 12C30 20 20 21 18 18.5C20 16 19 9 12 9C6 9 2 11 0 14Z" fill="url(#edge)" />
    <path d="M12 9.5C4 12 6 27 17 30C10 29.5 2 24 0 15C3 9 9 8.5 12 9.5Z" fill="#1a8fe0" /><path d="M12 13C8 18 13 27 22 25C24 24.5 26 23.5 28 22C25 28 19 30 15 30C6 27 7 15 12 13Z" fill="#0d4fa0" /><path d="M13 13C17 11 20 16 18 18.5C20 22 25 21 28 19.5L27.5 22C20 26 12 21 13 13Z" fill="#202020" /></T>,
  <T><rect x=".5" y=".5" width="29" height="29" rx="4" fill="#1b1a1a" stroke="#3a1517" /><path d="M19 0H27C29 0 30 1 30 3V11C28 5 25 1 19 0ZM0 24C2 28 4 30 9 30H4C1 30 0 29 0 26Z" fill="#7d1018" />
    <path d="M3 11C5 9 8 9 10 8C11 6 14 5 17 4L16 6L20 5L18 7C22 7 25 9 26.500 13L23 11C24 13 25 15 25 18C23 14 20 12 16 11C12 11 9 13 6 13L9 11Z" fill="#e0201f" />
    <path d="M2 17C8 14 17 14 25 20M3 20C9 24 18 24 25 20M4 17C10 20 18 18 23 22M6 25C11 22 18 26 22 25M14 28L19 27" stroke="#d21d1d" strokeWidth="1.400" /></T>,
  <T><circle cx="15" cy="15" r="15" fill="#6cb33f" /><path d="M6 7L11 6L13 16C14 20 18 19 18 16L16.5 6L21 5.5L23 15C23.5 18 25 18 26.5 17.5L26 20.5C23 22 20 21.5 19.5 19.5C18 22.5 14.5 23.5 12.5 22L15 29.5C13 30 11 29.8 10 29Z" fill="#fff" /></T>,
  <T><circle cx="15" cy="15" r="14" fill="#34a853" /><path d="M15 15L2.9 8A14 14 0 0 1 27.1 8Z" fill="#ea4335" /><path d="M15 8H27.1A14 14 0 0 1 14 29L21 18Z" fill="#fbc02d" /><path d="M2.9 8L9 18.5L15 8Z" fill="#ea4335" /><circle cx="15" cy="15" r="6.6" fill="#fff" /><circle cx="15" cy="15" r="5.2" fill="#4285f4" /></T>,
  <T><path d="M0 11L15 1L30 11V28.5H0Z" fill="#0f64b4" /><path d="M3 10H27V20H3Z" fill="#f2f2f2" /><path d="M0 10L15 20L30 10V28.5H0Z" fill="#35c0f4" /><path d="M0 10L15 20L28 28.5H0Z" fill="#1e98e0" /></T>,
  <T><path d="M0 3C0 2 1 2 2 2H10L13 5.5H30V12H0Z" fill="#e0a010" /><path d="M0 8H12L14 6H30V28.5H0Z" fill="#ffd257" /><path d="M5 28.5V23C5 21.5 6 20.5 7.5 20.5H23C24.5 20.5 25 21.5 25 23V28.5Z" fill="#1372c8" /><path d="M9 24.5H21" stroke="#0b4f94" strokeWidth="1.5" /></T>,
  <T><path d="M1 5H6.5L10.5 19L15 8L12.5 5H29L22 25H18L14.5 16L11.5 25H8Z" fill="#f5301f" /><path d="M16 8L20 19L24.5 8Z" fill="#202020" /><path d="M16.5 5H22L20 11L18.5 9Z" fill="#ff5f3f" /></T>,
  <T><circle cx="15" cy="15" r="14.5" fill="#fafafa" /><Slack /></T>,
  <T><path d="M16 0H25.5V30H16Z" fill="#dc9a10" /><path d="M9.5 7H19V30H9.5Z" fill="#f0b92c" /><path d="M3 15H12.5V30H3Z" fill="#f7df74" /></T>,
];

const App = () => (
  <Screen>
    <Global />
    <Window>
      <TitleBar>
        <QuickTools>
          <svg width="18" height="18" fill="none" stroke="#fff" strokeWidth="1.3"><path d="M.7 .7H17.3V17.3H3.5L.7 14.5ZM4 1V7.5H14V1M5 17V11.5H13V17M7.5 14V17" /></svg>
          <svg width="17" height="19" fill="none" stroke="#fff" strokeWidth="1.4"><path d="M.8 1V8H7.5M1 8L6 3C10 -1 16 1 16.2 6C16.2 8.5 15 10 13.5 11.5L7 18.5" /></svg>
          <svg width="17" height="19" fill="none" stroke="#7a7977" strokeWidth="1.4"><path d="M16.2 1V8H9.5M16 8L11 3C7 -1 1 1 .8 6C.8 8.5 2 10 3.5 11.5L10 18.5" /></svg>
        </QuickTools>
        <DocTitle>Untitled - Power BI Desktop</DocTitle>
        <TopSearch><Magnifier s={20} /> Search</TopSearch>
        <Account>Sign in <Avatar /></Account>
        <WindowButtons>
          <svg width="14" height="14" stroke="#fff" strokeWidth="1.5"><path d="M0 8H13" /></svg>
          <svg width="14" height="14" fill="none" stroke="#fff" strokeWidth="1.5"><path d="M3.5 3.5V.8H13.2V10.5H10.5M.8 3.7H10.3V13.2H.8Z" /></svg>
          <svg width="14" height="14" stroke="#fff" strokeWidth="1.5"><path d="M.8 .8L13.2 13.2M13.2 .8L.8 13.2" /></svg>
        </WindowButtons>
      </TitleBar>

      <TabRow>
        <RibbonTab $w={32}>File</RibbonTab>
        <RibbonTab $w={48} $ml={1} $on>Home</RibbonTab>
        <RibbonTab $w={43} $ml={-2}>Insert</RibbonTab>
        <RibbonTab $w={73} $ml={1}>Modeling</RibbonTab>
        <RibbonTab $w={35}>View</RibbonTab>
        <RibbonTab $w={40} $ml={1}>Help</RibbonTab>
      </TabRow>
      <Ribbon>
        <Group $w={200}>
          <GroupBody $pad={14}>
            <Big w={40} icon="paste" a="Paste" off />
            <SmallStack>
              <SmallButton>{smallIcons.cut} Cut</SmallButton>
              <SmallButton>{smallIcons.copy} Copy</SmallButton>
              <SmallButton>{smallIcons.painter} Format painter</SmallButton>
            </SmallStack>
          </GroupBody>
          <GroupName>Clipboard</GroupName>
        </Group>
        {groups.map((g) => (
          <Group key={g.name} $w={g.w}>
            <GroupBody $pad={g.pad} $center={g.center}>
              {g.items.map((it) => <Big key={it.icon} {...it} />)}
            </GroupBody>
            <GroupName>{g.name}</GroupName>
          </Group>
        ))}
        <Collapse><Chevron d="up" w={10} h={6} s={2.4} c={INK} /></Collapse>
      </Ribbon>
      <RibbonShadow />

      <Body>
        <Rail>
          <RailItem $on>
            <svg width="18" height="18" fill="none" stroke="#252423" strokeWidth="1.3"><path d="M.7 0V17.2H18M3.5 4H6V14.5H3.5ZM8.5 7.5H11V14.5H8.5ZM13.5 1H16V14.5H13.5Z" /></svg>
          </RailItem>
          <RailItem><TableIcon w={21} h={19} c="#797775" /></RailItem>
          <RailItem>
            <svg width="23" height="23" fill="none" stroke="#797775" strokeWidth="1.4"><path d="M13 .7H22.3V9H13ZM13 3.5H22M.7 6.5H9.5V15.5H.7ZM.7 9.5H9.5M13 13.5H22.3V22H13ZM13 16.5H22M5 6.5V3H13M5 15.5V19H13" /></svg>
          </RailItem>
        </Rail>

        <Center>
          <Page>
            <Back>
              <svg width="31" height="31" fill="none" stroke="#55534f" strokeWidth="2.6"><circle cx="15.5" cy="15.5" r="14" /><path d="M24.5 15.5H7.5M15.5 7L7.5 15.5L15.5 24" strokeWidth="3" /></svg>
            </Back>
            <VisualTools>
              <svg width="20" height="18" fill="none" stroke="#797775" strokeWidth="1.3"><path d="M.8 .8H19.2V2L12 9.5V17.3H8.5V9.5L.8 2Z" /></svg>
              <svg width="19" height="17" fill="none" stroke="#797775" strokeWidth="1.3"><path d="M8 1H1V16H18V10M12 1H18V6.5M18 1L10.5 8M1 10H8V16" /></svg>
              <svg width="18" height="17" fill="#605e5c"><circle cx="2" cy="7" r="1.3" /><circle cx="9.5" cy="7" r="1.3" /><circle cx="17" cy="7" r="1.3" /></svg>
            </VisualTools>
            <Visual>
              <VisualTitle>net_bill_amt, Count of product_id and sale_qty by user_name</VisualTitle>
              <Legend>
                <LegendItem $w={90}><Dot $s={10} $c="#118dff" />net_bill_amt</LegendItem>
                <LegendItem $w={139}><Dot $s={10} $c="#12239e" />Count of product_id</LegendItem>
                <LegendItem $w={70}><Dot $s={10} $c="#e66c37" />sale_qty</LegendItem>
              </Legend>
              <Chart />
              <Tooltip>
                <TipTitle>rzn_rai</TipTitle>
                <TipRow><Dot $s={13} $c="#118dff" /><TipName>net_bill_amt</TipName><TipValue $ls={-0.6}>98,110.81</TipValue></TipRow>
                <TipRow><Dot $s={13} $c="#12239e" /><TipName>Count of product_id</TipName><TipValue $ls={-0.5}>14</TipValue></TipRow>
                <TipRow><Dot $s={13} $c="#e66c37" /><TipName>sale_qty</TipName><TipValue $ls={0.2}>2450</TipValue></TipRow>
              </Tooltip>
            </Visual>
          </Page>
          <PageTabs>
            <TabArrows>
              <svg width="6" height="11"><path d="M6 0V11L0 5.5Z" fill="#c8c6c4" /></svg>
              <svg width="6" height="11"><path d="M0 0V11L6 5.5Z" fill="#c8c6c4" /></svg>
            </TabArrows>
            {[1, 2, 3, 4, 5, 6, 7].map((n) => (
              <PageTab key={n} $on={n === 6}>Page {n}{n === 6 && <TabClose>x</TabClose>}</PageTab>
            ))}
            <AddPage><svg width="14" height="14" stroke="#6b6a66" strokeWidth="4"><path d="M0 7H14M7 0V14" /></svg></AddPage>
          </PageTabs>
        </Center>

        <FilterPane>
          <Chevron d="left" />
          <FilterIcon>
            <svg width="14" height="15" fill="none" stroke="#4a4846" strokeWidth="1.2"><path d="M13.3 .7V14.3L6.5 9H.7V6H6.5Z" /></svg>
          </FilterIcon>
          <FilterTitle>Filters</FilterTitle>
        </FilterPane>

        <VizPane>
          <PaneHead $h={64}><PaneTitle>Visualizations</PaneTitle><Chevron /></PaneHead>
          <VizGrid>{gallery.map((g, i) => <React.Fragment key={i}>{g}</React.Fragment>)}</VizGrid>
          <Rule />
          <FormatTabs>
            <FormatTab $on>
              <svg width="26" height="25" fill="none" stroke="#252423" strokeWidth="1.4"><path d="M0 .8H20" /><path d="M.7 4.5H25V12H.7ZM.7 16H25V23.5H.7Z" strokeDasharray="2.2 1.3" /></svg>
            </FormatTab>
            <FormatTab>
              <svg width="24" height="25" fill="none" stroke="#252423" strokeWidth="1.4"><rect x=".7" y=".8" width="18" height="5" rx="1" /><path d="M19 3H22.5V9H11V12.5M8 12.8H14V24.3H8Z" /></svg>
            </FormatTab>
          </FormatTabs>
          <PaneLabel $m="6px 0 7px 15px" $ls={-0.15}>Values</PaneLabel>
          <DropWell $h={35} $pad={13}>Add data fields here</DropWell>
          <DrillTitle>Drill through</DrillTitle>
          <PaneLabel $m="18px 0 0 11px" $ls={0.12}>Cross-report</PaneLabel>
          <Switch>Off
            <svg width="39" height="15" fill="#f3f2f1" stroke="#605e5c" strokeWidth="1.8"><rect x="15" y="6" width="22" height="2.5" rx="1" strokeWidth="1" /><circle cx="8" cy="7.5" r="6.5" /></svg>
          </Switch>
          <PaneLabel $m="25px 0 0 11px" $ls={0.02}>Keep all filters</PaneLabel>
          <Switch>On
            <svg width="39" height="15" fill="#f3f2f1" stroke="#605e5c"><rect x=".5" y="6" width="24" height="2.5" rx="1" /><circle cx="30.5" cy="7.5" r="7.3" fill="#605e5c" stroke="none" /></svg>
          </Switch>
          <DropWell $h={33} $pad={10} $mt={18}>Add drill-through fields here</DropWell>
        </VizPane>

        <FieldPane>
          <PaneHead $h={60}><PaneTitle>Fields</PaneTitle><Chevron /></PaneHead>
          <FieldSearch><Magnifier s={18} /><span>Search</span></FieldSearch>
          <Rule />
          <ListWrap>
            <List>{fields.map(([n, k], i) => <Field key={i} name={n} kind={k} />)}</List>
            <Thumb />
          </ListWrap>
        </FieldPane>
      </Body>
      <Status>Page 6 of 7</Status>
    </Window>

    <Taskbar>
      <Apps>
        {apps.map((a, i) => (
          <AppTile key={i} $on={i === 12}>{a}{[7, 11, 12].includes(i) && <Running $on={i === 12} />}</AppTile>
        ))}
      </Apps>
      <Tray>
        <Chevron d="up" w={16} h={8} c="#fff" s={1.5} />
        <TrayItem $ml={13}><Slack mono s={17} /></TrayItem>
        <TrayItem $ml={12}>
          <svg width="20" height="14"><path d="M5 5A6.5 6.5 0 0 1 16 5L10 9Z" fill="#8a8a8a" /><path d="M5 5A4.6 4.6 0 0 0 1 11L12 8L8 4.5Z" fill="#c8c8c8" /><path d="M3 13.5C0 12 1 9.5 3 9L13 5.5C20 5 22 13 17 13.5Z" fill="#fff" /></svg>
        </TrayItem>
        <TrayItem $ml={15}>
          <svg width="20" height="16" fill="none" stroke="#fff" strokeWidth="1.5"><path d="M.8 6.5C6 -.5 14 -.5 19.2 6.5M3.8 9C7.5 4 12.5 4 16.2 9M6.8 11.5C9 8.5 11 8.5 13.2 11.5" /><circle cx="10" cy="13.5" r="1.6" fill="#fff" stroke="none" /></svg>
        </TrayItem>
        <TrayItem $ml={10}>
          <svg width="20" height="17" fill="none" stroke="#fff" strokeWidth="1.4"><path d="M.8 5.5H4L9 1.5V15.5L4 11.5H.8ZM11.5 5.5C13 7 13 10 11.5 11.5M14 3C17 6 17 11 14 14M16.5 1C20.5 5 20.5 12 16.5 16" /></svg>
        </TrayItem>
        <TrayItem $ml={10}>
          <svg width="20" height="17" fill="none" stroke="#fff" strokeWidth="1.4"><path d="M8 3H16C17 3 17.5 3.5 17.5 4.5V13.5C17.5 14.5 17 15 16 15H6C5 15 5 14.5 5 13.5V10" /><path d="M8 6H14.5V12H7.5V9Z" fill="#fff" stroke="none" /><path d="M18.5 7V11" strokeWidth="2.2" /><path d="M0 3H8V6L6 8.5H2L0 6ZM1.5 0H3V3H1.5ZM5 0H6.5V3H5Z" fill="#fff" stroke="none" /></svg>
        </TrayItem>
      </Tray>
      <Clock>10:43 PM<br />9/22/2021</Clock>
      <Badge>12</Badge>
    </Taskbar>
  </Screen>
);

export default App;
